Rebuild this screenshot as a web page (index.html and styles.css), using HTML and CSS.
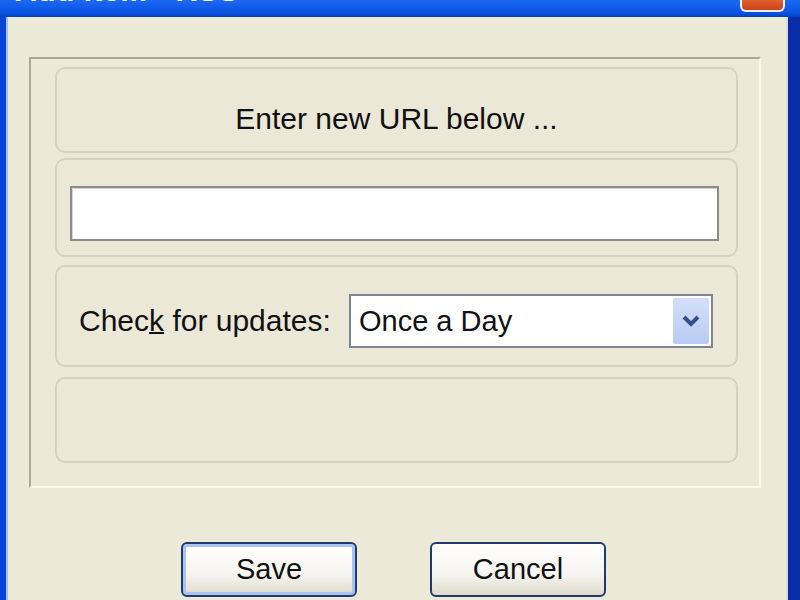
FILE: index.html
```html
<!DOCTYPE html>
<html lang="en">
<head>
    <meta charset="UTF-8">
    <title>Add Item - RSS</title>
    <link rel="stylesheet" href="styles.css">
</head>
<body>
    <div class="window">
        <div class="titlebar">
            <span class="title">Add Item - RSS</span>
            <span class="close"></span>
        </div>
        <div class="frame">
            <div class="client">
                <div class="group">
                    <div class="panel prompt">Enter new URL below ...</div>
                    <div class="panel url-row">
                        <input type="text" class="url">
                    </div>
                    <div class="panel check-row">
                        <label>Chec<u>k</u> for updates:</label>
                        <div class="select">
                            <span>Once a Day</span>
                            <span class="arrow">
                                <svg width="20" height="14" viewBox="0 0 20 14"><path d="M3 3 L10 10 L17 3" fill="none" stroke="#34508a" stroke-width="4"/></svg>
                            </span>
                        </div>
                    </div>
                    <div class="panel empty"></div>
                </div>
                <div class="actions">
                    <button class="btn default">Save</button>
                    <button class="btn">Cancel</button>
                </div>
            </div>
        </div>
    </div>
</body>
</html>
```

FILE: styles.css
```css
body {
    margin: 0;
    height: 600px;
    overflow: hidden;
    background: #0a3fd4;
    font-family: "Liberation Sans", Arial, sans-serif;
    color: #111;
}
.window {
    display: flex;
    flex-direction: column;
    height: 600px;
}
.titlebar {
    height: 17px;
    display: flex;
    justify-content: space-between;
    align-items: flex-start;
    background: linear-gradient(#1b68f2, #0b56e4 70%, #0640c4);
    overflow: hidden;
    padding: 0 15px 0 15px;
}
.title {
    color: #fff;
    font-weight: bold;
    font-size: 30px;
    line-height: 30px;
    letter-spacing: 0.5px;
    margin-top: -24px;
}
.close {
    width: 41px;
    height: 10px;
    background: linear-gradient(#e0622f, #c8421a);
    border: 2px solid #f1f1f1;
    border-top: none;
    border-radius: 0 0 6px 6px;
}
.frame {
    flex: 1;
    display: flex;
    border-left: 6px solid #0845d6;
    border-right: 12px solid #0a2ca6;
}
.client {
    flex: 1;
    background: #ece9d8;
    border-left: 2px solid #a8c2ef;
    border-right: 2px solid #d6dcec;
    padding: 40px 25px 0 21px;
}
.group {
    border-top: 2px solid #aca899;
    border-left: 2px solid #aca899;
    border-right: 2px solid #fbf9ef;
    border-bottom: 2px solid #fbf9ef;
    padding: 8px 21px 23px 24px;
}
.panel {
    box-sizing: border-box;
    border: 2px solid #d5d2c1;
    border-radius: 10px;
    background: #ebe8d8;
    font-size: 30px;
}
.prompt {
    height: 86px;
    display: flex;
    justify-content: center;
    align-items: center;
    padding-top: 18px;
    margin-bottom: 5px;
}
.url-row {
    height: 99px;
    padding: 26px 17px 0 13px;
    margin-bottom: 8px;
}
.url {
    display: block;
    box-sizing: border-box;
    width: 100%;
    height: 55px;
    border: 2px solid #8b8b8b;
    box-shadow: inset 1px 1px 0 #d8d8d8;
    background: #fff;
    margin: 0;
}
.check-row {
    height: 102px;
    display: flex;
    align-items: center;
    padding: 10px 23px 0 22px;
    margin-bottom: 10px;
}
.check-row u {
    text-decoration-thickness: 2px;
}
.select {
    box-sizing: border-box;
    width: 364px;
    height: 54px;
    margin-left: auto;
    display: flex;
    align-items: center;
    padding: 2px 2px 2px 8px;
    border: 2px solid #7f8590;
    background: #fff;
    font-size: 29px;
}
.arrow {
    margin-left: auto;
    width: 36px;
    height: 46px;
    display: flex;
    align-items: center;
    justify-content: center;
    background: linear-gradient(#d3dffa, #b9cbf3);
    border-radius: 2px;
}
.empty {
    height: 86px;
}
.actions {
    display: flex;
    gap: 73px;
    padding: 54px 0 0 152px;
}
.btn {
    box-sizing: border-box;
    width: 176px;
    height: 55px;
    font-family: "Liberation Sans", Arial, sans-serif;
    font-size: 29px;
    color: #111;
    border: 2px solid #1f3b6c;
    border-radius: 6px;
    background: linear-gradient(#ffffff, #f5f4ef 60%, #dedacb);
    padding: 0;
}
.btn.default {
    box-shadow: inset 0 0 0 3px #a9c4f2;
}
```
